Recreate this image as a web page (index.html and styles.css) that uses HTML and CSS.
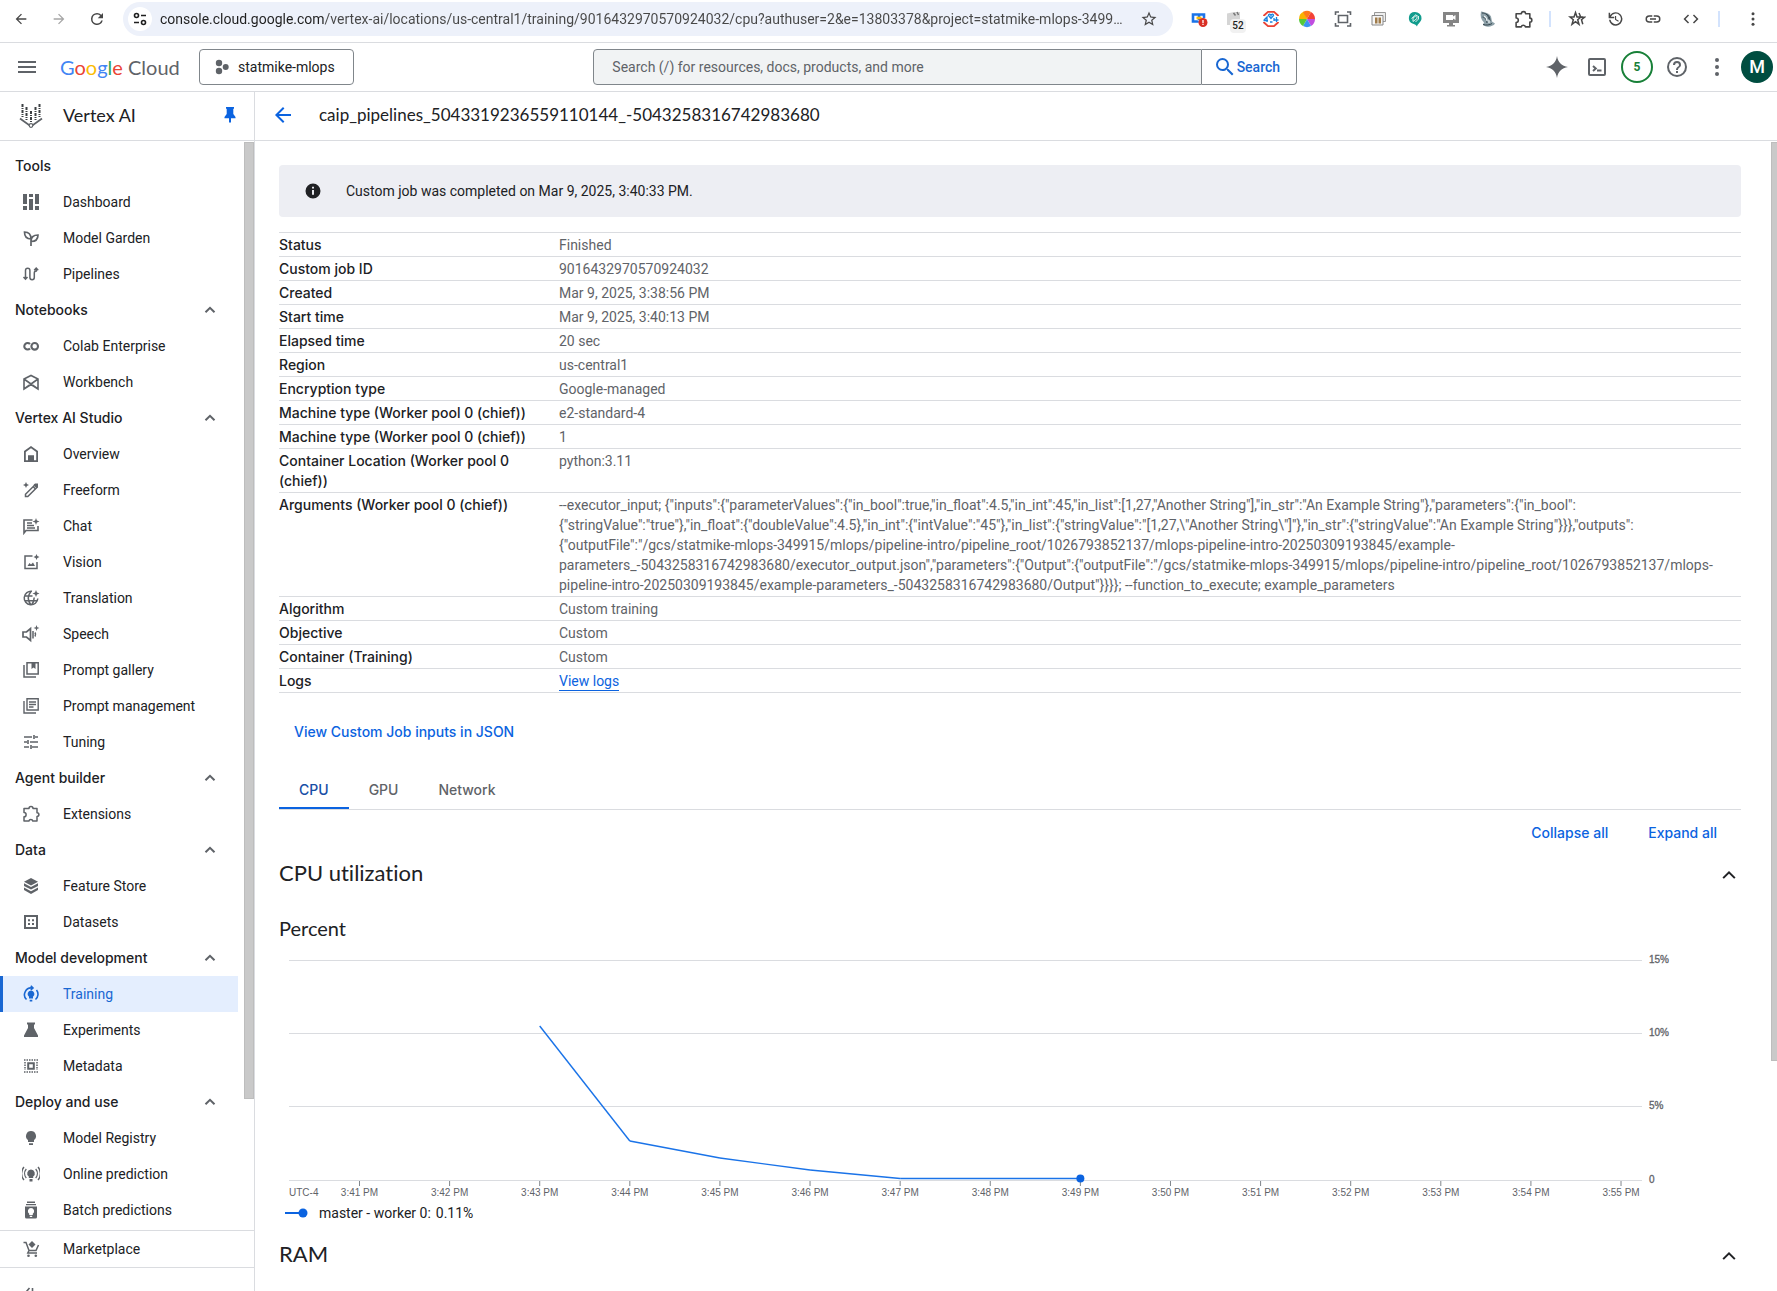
FILE: index.html
```html
<!DOCTYPE html>
<html lang="en">
<head>
<meta charset="utf-8">
<title>Training – Vertex AI – Google Cloud console</title>
<link rel="stylesheet" href="styles.css">
</head>
<body>
<svg class="sprite" aria-hidden="true">
  <symbol id="chev" viewBox="0 0 12 12"><path d="M1.500 8.300 6 3.800l4.500 4.500" fill="none" stroke="currentColor" stroke-width="2"/></symbol>
  <symbol id="chev-lg" viewBox="0 0 24 24"><path d="M5 15.800 12 8.800l7 7" fill="none" stroke="currentColor" stroke-width="2.400"/></symbol>
  <symbol id="back" viewBox="0 0 24 24"><path d="M20 11H7.830l5.590-5.590L12 4l-8 8 8 8 1.410-1.410L7.830 13H20v-2z"/></symbol>
  <symbol id="forward" viewBox="0 0 24 24"><path d="M12 4l-1.410 1.410L16.170 11H4v2h12.170l-5.580 5.590L12 20l8-8z"/></symbol>
  <symbol id="dots" viewBox="0 0 24 24"><circle cx="12" cy="5" r="2"/><circle cx="12" cy="12" r="2"/><circle cx="12" cy="19" r="2"/></symbol>
  <symbol id="puzzle" viewBox="0 0 18 18"><path d="M2 3.500h5a2 2 0 0 1 4 0h4v4.200a1.900 1.900 0 0 1 0 3.800V16H10.800a2 2 0 0 0-3.900 0H2v-4.200a2.100 2.100 0 0 0 0-4.200z" fill="none" stroke="currentColor" stroke-width="1.500" stroke-linejoin="round"/></symbol>
  <symbol id="bulb" viewBox="0 0 18 18"><path d="M9 2a5 5 0 0 0-3 9v2h6v-2a5 5 0 0 0-3-9zM7 14.200h4V16H7z"/></symbol>
</svg>

<div class="app">
  <header class="browser">
    <div class="browser-nav">
      <button class="tool" aria-label="Back"><svg width="16" height="16"><use href="#back"/></svg></button>
      <button class="tool faded" aria-label="Forward"><svg width="16" height="16"><use href="#forward"/></svg></button>
      <button class="tool" aria-label="Reload"><svg width="18" height="18" viewBox="0 0 24 24"><path d="M17.650 6.350A7.960 7.960 0 0 0 12 4a8 8 0 1 0 7.730 10h-2.080A6 6 0 1 1 12 6c1.660 0 3.140.690 4.220 1.780L13 11h7V4z"/></svg></button>
    </div>
    <div class="omnibox">
      <button class="site" aria-label="View site information"><svg width="16" height="16" viewBox="0 0 16 16" fill="none" stroke="currentColor" stroke-width="1.600"><circle cx="4.500" cy="4.500" r="2"/><path d="M9 4.500h5M2 11.500h5"/><circle cx="11.500" cy="11.500" r="2"/></svg></button>
      <input class="url" type="text" aria-label="Address" value="console.cloud.google.com/vertex-ai/locations/us-central1/training/9016432970570924032/cpu?authuser=2&amp;e=13803378&amp;project=statmike-mlops-349915">
      <button class="tool star" aria-label="Bookmark this page"><svg width="18" height="18" viewBox="0 0 24 24"><path d="M22 9.240l-7.190-.620L12 2 9.190 8.630 2 9.240l5.460 4.730L5.820 21 12 17.270 18.180 21l-1.630-7.030zM12 15.400l-3.760 2.270 1-4.280-3.320-2.880 4.380-.380L12 6.100l1.710 4.040 4.380.380-3.320 2.880 1 4.280z"/></svg></button>
    </div>
    <div class="extensions">
      <button aria-label="Cloud extension"><svg width="18" height="18" viewBox="0 0 18 18"><path d="M7.500 5.500V4.500H3v7h4.500v-1M9 10V4.500h5V8" fill="none" stroke="#1a73e8" stroke-width="2.600"/><path d="M6.500 8h5" stroke="#fbbc04" stroke-width="2.600"/><circle cx="13" cy="12.500" r="4.500" fill="#d93025"/><path d="M13 10v3M13 13.800v1.200" stroke="#fff" stroke-width="1.300"/></svg></button>
      <button class="badged" aria-label="Notes, 52 items"><svg width="18" height="18" viewBox="0 0 18 18"><path d="M1 3.500 8 2h6v13H1z" fill="#d5d5d5"/><path d="M7.500 3l2 2.500M11 2l1.500 3" stroke="#777" stroke-width="1.500"/></svg><span class="badge">52</span></button>
      <button aria-label="Ad filter"><svg width="18" height="18" viewBox="0 0 18 18" fill="none"><path d="M2 6V5.500L6 1.800h6l4 3.700V6M2 12v.500l4 3.700h6l4-3.700V12" stroke="#ea4335" stroke-width="1.800"/><path d="M1.500 10.500h4.500M2 10l3-3v5M12 11V8M12 10h4.500M14.500 7v5M6.500 5.500c0-2 2-1.500 2.500 0 .500-1.500 2.500-2 2.500 0L9 8.500zM8 12h2.500" stroke="#1a84e0" stroke-width="1.300"/></svg></button>
      <button aria-label="Color picker"><svg width="18" height="18" viewBox="0 0 18 18"><path d="M9 9 1 9a8 8 0 0 1 5-7.400z" fill="#f9b300"/><path d="M9 9 5 2a8 8 0 0 1 8 0z" fill="#ff7a1a"/><path d="M9 9l4-7a8 8 0 0 1 4 7z" fill="#f44336"/><path d="M9 9h8a8 8 0 0 1-4 7z" fill="#c04de0"/><path d="M9 9l4 7a8 8 0 0 1-8 0z" fill="#3b93f3"/><path d="M9 9l-4 7a8 8 0 0 1-4-7z" fill="#57c93a"/></svg></button>
      <button aria-label="Screenshot"><svg width="18" height="18" viewBox="0 0 18 18" fill="none" stroke="#5f6368" stroke-width="1.600"><path d="M1.500 5V2H5M13 2h3.500v3M16.500 13v3H13M5 16H1.500v-3"/><path d="M4.500 5.500h9v7h-9z"/></svg></button>
      <button aria-label="Window manager"><svg width="18" height="18" viewBox="0 0 18 18"><path d="M4.500 2.500h11v9h-11z" fill="#eee" stroke="#999"/><path d="M2 5.500h11v9.500H2z" fill="#f6f6f6" stroke="#888"/><path d="M5 7.500h2.500v6H5zM8.500 7.500H11v6H8.500z" fill="#a07c4a"/></svg></button>
      <button aria-label="Location tool"><svg width="18" height="18" viewBox="0 0 18 18"><path d="M9 2a6.500 6.200 0 0 1 6.500 6.200c0 4-4 5.300-4.500 8.300-1-1.500-2-2.300-4-2.800A6 6 0 0 1 9 2z" fill="#119c8d"/><path d="M5.500 8.500 10 4.500M7 11.500V8l4-3v3.500zM9.500 12l3-3V6" fill="none" stroke="#d9f0ec" stroke-width="1"/></svg></button>
      <button aria-label="Screen recorder"><svg width="18" height="18" viewBox="0 0 18 18"><path d="M1 2h16v11h-6v2h2v1.500H5V15h2v-2H1z" fill="#858585"/><path d="M4 5h7v1.500L13.500 5v5L11 8.500V10H4z" fill="#fff"/></svg></button>
      <button aria-label="Knight extension"><svg width="18" height="18" viewBox="0 0 18 18"><path d="M3 1.500c4 1 8 1 10 5l1 5 3 2c-2 4-11 4-12 1l1-2C3 10 2 6 3 1.500z" fill="#8ea1a9"/><path d="M4 3c4 0 6 2 7 6M4.500 7c2 0 4 2 4.500 6M8 4c3 1 4 4 4 7M5 14.500c3 1 7 .500 9-1" fill="none" stroke="#34454d" stroke-width="1"/><path d="M6 6c2 1 3 3 3 5M11 10v3" fill="none" stroke="#eef4f6" stroke-width="1.200"/></svg></button>
      <button aria-label="Extensions"><svg width="19" height="19"><use href="#puzzle"/></svg></button>
    </div>
    <span class="bar-sep"></span>
    <div class="shortcuts">
      <button aria-label="Favorites"><svg width="18" height="18" viewBox="0 0 18 18" fill="none" stroke="currentColor" stroke-width="1.500"><path d="M7.500 2.500 9 7h4l-3.300 2.700 1.300 4.600-3.500-2.600L4 14.300l1.300-4.600L2 7h4zM11 3l1.500 3.500M12.700 7.200h3.800l-3 2.500 1.300 4.600"/></svg></button>
      <button aria-label="History"><svg width="18" height="18" viewBox="0 0 24 24"><path d="M13 3a9 9 0 0 0-7.500 4V3.500h-2V11H11V9H6.500A7 7 0 1 1 6 13H4a9 9 0 1 0 9-10zm-1 5v5l4.300 2.600.800-1.300-3.600-2.100V8z"/></svg></button>
      <button aria-label="Copy link"><svg width="18" height="18" viewBox="0 0 24 24"><path d="M3.900 12c0-1.710 1.390-3.100 3.100-3.100h4V7H7a5 5 0 0 0 0 10h4v-1.900H7A3.100 3.100 0 0 1 3.900 12zM8 13h8v-2H8zm9-6h-4v1.900h4a3.100 3.100 0 1 1 0 6.200h-4V17h4a5 5 0 0 0 0-10z"/></svg></button>
      <button aria-label="Developer tools"><svg width="18" height="18" viewBox="0 0 24 24"><path d="M9.400 16.600 4.800 12l4.600-4.600L8 6l-6 6 6 6zm5.200 0 4.600-4.600-4.600-4.600L16 6l6 6-6 6z"/></svg></button>
    </div>
    <span class="bar-sep"></span>
    <button class="menu-dots" aria-label="Chrome menu"><svg width="18" height="18"><use href="#dots"/></svg></button>
  </header>

  <header class="gcp">
    <button class="burger" aria-label="Main menu"><svg width="18" height="12" viewBox="0 0 18 12"><path d="M0 0h18v2H0zM0 5h18v2H0zM0 10h18v2H0z"/></svg></button>
    <a class="logo" href="#"><span class="b">G</span><span class="r">o</span><span class="y">o</span><span class="b">g</span><span class="g">l</span><span class="r">e</span> Cloud</a>
    <button class="project"><svg width="14" height="16" viewBox="0 0 14 16"><circle cx="4" cy="4" r="3.200"/><circle cx="4" cy="12" r="3.200"/><circle cx="10.700" cy="8" r="3"/></svg>statmike-mlops</button>
    <form class="search">
      <input type="text" aria-label="Search" placeholder="Search (/) for resources, docs, products, and more">
      <button type="button"><svg width="24" height="24" viewBox="0 0 24 24"><path d="M15.500 14h-.790l-.280-.270A6.470 6.470 0 0 0 16 9.500 6.500 6.500 0 1 0 9.500 16c1.610 0 3.090-.590 4.230-1.570l.270.280v.790l5 4.990L20.490 19zm-6 0a4.500 4.500 0 1 1 0-9 4.500 4.500 0 0 1 0 9z"/></svg>Search</button>
    </form>
    <div class="gcp-tools">
      <button aria-label="Gemini"><svg width="24" height="24" viewBox="0 0 24 24"><path d="M12 1c.900 6.300 4.700 10.100 11 11-6.300.900-10.100 4.700-11 11-.900-6.300-4.700-10.100-11-11 6.300-.900 10.100-4.700 11-11z"/></svg></button>
      <button aria-label="Cloud Shell"><svg width="20" height="20" viewBox="0 0 20 20" fill="none" stroke="currentColor" stroke-width="2"><rect x="2" y="2" width="16" height="16" rx="1"/><path d="M6 9l2.800 2.500L6 14M10 13.500h4.500"/></svg></button>
      <button aria-label="5 notifications"><span class="ring">5</span></button>
      <button aria-label="Help"><svg width="24" height="24" viewBox="0 0 24 24"><path d="M11 18h2v-2h-2zm1-16a10 10 0 1 0 0 20 10 10 0 0 0 0-20zm0 18a8 8 0 1 1 0-16 8 8 0 0 1 0 16zm0-14a4 4 0 0 0-4 4h2a2 2 0 1 1 4 0c0 2-3 1.750-3 5h2c0-2.250 3-2.500 3-5a4 4 0 0 0-4-4z"/></svg></button>
      <button aria-label="More options"><svg width="24" height="24"><use href="#dots"/></svg></button>
      <button aria-label="Account"><span class="avatar">M</span></button>
    </div>
  </header>

  <div class="body">
    <aside class="sidebar">
      <div class="side-title">
        <svg width="24" height="26" viewBox="0 0 24 26"><path d="M1 16.500 12 24.500 23 16.500" fill="none" stroke="#5f6368" stroke-width="1.800"/><circle cx="12" cy="23.500" r="1.800" fill="#fff" stroke="#5f6368" stroke-width="1.200"/><path d="M3.500 2v13M7.500 5v13M12 9v11M16.500 5v13M20.500 2v13" stroke="#3c4043" stroke-width="2" stroke-dasharray="3 1 1 1"/></svg>
        <span class="product">Vertex AI</span>
        <button class="pin" aria-label="Unpin menu"><svg width="14" height="18" viewBox="0 0 14 18"><path d="M3 1h8v1.500l-.700.500v5L12.500 11v1.200H8V16l-1 1-1-1v-3.800H1.500V11l2.200-3V3L3 2.500z"/></svg></button>
      </div>
      <div class="side-scroll">
        <nav class="nav">
          <h2>Tools</h2>
          <a href="#"><svg viewBox="0 0 18 18"><path d="M1 1h4v10H1zM1 13h4v4H1zM7 1h4v3H7zM7 6h4v11H7zM13 1h4v10h-4zM13 13h4v4h-4z"/></svg>Dashboard</a>
          <a href="#"><svg viewBox="0 0 18 18" fill="none" stroke="currentColor" stroke-width="1.700"><path d="M9 17V10M9 10C4 10 2.500 7 2.500 3 6 3 9 4.500 9 10zM9 12.500C9 8 11.500 6 16 6c0 4-2.500 6.500-7 6.500z"/></svg>Model Garden</a>
          <a href="#"><svg viewBox="0 0 18 18" fill="none" stroke="currentColor" stroke-width="1.500"><path d="M3.500 14V5.500a2.200 2.200 0 0 1 4.400 0v7a2.200 2.200 0 0 0 4.400 0V8a2 2 0 0 1 2-2V3M1.500 12l2 2.200 2-2.200M12.200 5.200l2-2.200 2 2.200"/></svg>Pipelines</a>
          <h2>Notebooks<button aria-label="Collapse Notebooks"><svg><use href="#chev"/></svg></button></h2>
          <a href="#"><svg viewBox="0 0 18 18" fill="none" stroke="currentColor" stroke-width="2.100"><path d="M8 7A3.300 3.300 0 1 0 8 11.500"/><circle cx="12.700" cy="9.300" r="3.300"/></svg>Colab Enterprise</a>
          <a href="#"><svg viewBox="0 0 18 18" fill="none" stroke="currentColor" stroke-width="1.600"><path d="M2 6 9 2.500 16 6v10L9 11.500 2 16zM2 6l14 10M16 6 2 16"/></svg>Workbench</a>
          <h2>Vertex AI Studio<button aria-label="Collapse Vertex AI Studio"><svg><use href="#chev"/></svg></button></h2>
          <a href="#"><svg viewBox="0 0 18 18"><path d="M9 1 2 6v11h14V6zm0 2.200L14.200 7v8.200H12v-5H6v5H3.800V7z"/><path d="M6.500 11h5v5h-5z"/></svg>Overview</a>
          <a href="#"><svg viewBox="0 0 18 18"><path d="M4 1l.900 2.100L7 4l-2.100.900L4 7l-.900-2.100L1 4l2.100-.900z"/><path d="M3.500 15.500v-2.300L12.800 4l2.300 2.300L5.800 15.500zM11 5.500l2.500 2.500" fill="none" stroke="currentColor" stroke-width="1.500"/><path d="M13 2.500h3v3l-1.500 1.800L11.500 4z"/></svg>Freeform</a>
          <a href="#"><svg viewBox="0 0 18 18"><path d="M10.500 3H2v13l2-2.500h12V9" fill="none" stroke="currentColor" stroke-width="1.600"/><path d="M5 6h5M5 8.500h7M5 11h8" stroke="currentColor" stroke-width="1.300"/><path d="M14 1l.900 2.600 2.600.900-2.600.900L14 8l-.900-2.600-2.600-.900 2.600-.900z"/></svg>Chat</a>
          <a href="#"><svg viewBox="0 0 18 18"><path d="M10.500 3H3v12.500h12V9" fill="none" stroke="currentColor" stroke-width="1.500"/><path d="M5.500 13 7.500 10l1.500 1.500L11 9.500l2 3.500z"/><path d="M14.500 1l.900 2.100 2.100.900-2.100.900-.900 2.100-.900-2.100-2.100-.900 2.100-.900z"/></svg>Vision</a>
          <a href="#"><svg viewBox="0 0 18 18"><path d="M10 2.300A6.800 6.800 0 1 0 15.800 9.500M2.500 7h8M2.500 11.700h13M9 2.500c-3.500 4-3.500 9 0 13.500M9.500 16c2.500-3 2.700-4.500 2.700-7.500" fill="none" stroke="currentColor" stroke-width="1.500"/><path d="M14 1l1 2.500 2.500 1L15 5.500 14 8l-1-2.500-2.500-1 2.500-1z"/></svg>Translation</a>
          <a href="#"><svg viewBox="0 0 18 18"><path d="M1 7h3.500L8.500 3.500v12L4.500 12H1z" fill="none" stroke="currentColor" stroke-width="1.700"/><path d="M11 6v7.500M13 7.500c.800 1.300.800 2.700 0 4" fill="none" stroke="currentColor" stroke-width="1.500"/><path d="M14.500 0l.800 2.200 2.200.800-2.200.800-.800 2.200-.800-2.200-2.200-.800 2.200-.800z"/></svg>Speech</a>
          <a href="#"><svg viewBox="0 0 18 18"><path d="M5 1.800h11.200V13H5zM2 4v12h12" fill="none" stroke="currentColor" stroke-width="1.500"/><path d="M9.500 2h4v6l-2-1.500-2 1.500z"/></svg>Prompt gallery</a>
          <a href="#"><svg viewBox="0 0 18 18"><path d="M5 1.800h11.200V13H5zM2 4v12h12M7 5h7M7 7.500h7M7 10h4.500" fill="none" stroke="currentColor" stroke-width="1.400"/></svg>Prompt management</a>
          <a href="#"><svg viewBox="0 0 18 18"><path d="M2 4h8M13 4h3M12 2v4M2 9h3M8 9h8M6 7v4M2 14h5M10 14h6M9 12v4" fill="none" stroke="currentColor" stroke-width="1.600"/></svg>Tuning</a>
          <h2>Agent builder<button aria-label="Collapse Agent builder"><svg><use href="#chev"/></svg></button></h2>
          <a href="#"><svg><use href="#puzzle"/></svg>Extensions</a>
          <h2>Data<button aria-label="Collapse Data"><svg><use href="#chev"/></svg></button></h2>
          <a href="#"><svg viewBox="0 0 18 18"><path d="M9 1l7 3.700-7 3.700-7-3.700zM2 6.300l7 3.700 7-3.700v2.600l-7 3.700-7-3.700zM2 10.500l7 3.700 7-3.700v2.600L9 17l-7-3.900z"/></svg>Feature Store</a>
          <a href="#"><svg viewBox="0 0 18 18"><path d="M3 3h12v12H3z" fill="none" stroke="currentColor" stroke-width="2"/><path d="M6 6.300h2v2H6zM10 6.300h2v2h-2zM6 10h2v2H6zM10 10h2v2h-2z"/></svg>Datasets</a>
          <h2>Model development<button aria-label="Collapse Model development"><svg><use href="#chev"/></svg></button></h2>
          <a class="active" href="#" aria-current="page"><svg viewBox="0 0 18 18"><path d="M9 5.500a3.500 3.500 0 0 0-2 6.300V13.500h4v-1.700a3.500 3.500 0 0 0-2-6.300zM7.700 14.700h2.600V16.500H7.700z"/><path d="M4.500 14.500A6.800 6.800 0 0 1 10.500 3M13.500 14.500a6.800 6.800 0 0 0 1-9.500M8.800.800l2.200 2.200L8.800 5" fill="none" stroke="currentColor" stroke-width="1.600"/></svg>Training</a>
          <a href="#"><svg viewBox="0 0 18 18"><path d="M5 1.500h8V3.500h-1V7l4 7.500V16H2v-1.500L6 7V3.500H5z"/></svg>Experiments</a>
          <a href="#"><svg viewBox="0 0 18 18" fill="none" stroke="currentColor"><path d="M2 3h14M2 15h14M3 5v8M15 5v8" stroke-width="1.500" stroke-dasharray="1.500 1"/><path d="M6.200 6.200h5.600v5.600H6.200z" stroke-width="2"/></svg>Metadata</a>
          <h2>Deploy and use<button aria-label="Collapse Deploy and use"><svg><use href="#chev"/></svg></button></h2>
          <a href="#"><svg><use href="#bulb"/></svg>Model Registry</a>
          <a href="#"><svg viewBox="0 0 18 18"><path d="M9 4.500a3.800 3.800 0 0 0-2.200 6.900V13h4.400v-1.600A3.800 3.800 0 0 0 9 4.500zM7.500 14h3v2.500h-3z"/><path d="M4.300 13a7 7 0 0 1 0-9M13.700 13a7 7 0 0 0 0-9M2 15a10 10 0 0 1 0-13M16 15a10 10 0 0 0 0-13" fill="none" stroke="currentColor" stroke-width="1.300"/></svg>Online prediction</a>
          <a href="#"><svg viewBox="0 0 18 18"><path d="M5 .500h8V2H5zM4 3h10v1.300H4zM3 5.500h12V16a1.500 1.500 0 0 1-1.500 1.500h-9A1.500 1.500 0 0 1 3 16zM9 7a3.200 3.200 0 0 0-1.800 5.800V14h3.600v-1.200A3.200 3.200 0 0 0 9 7zM7.800 14.800V16h2.400v-1.200z" fill-rule="evenodd"/></svg>Batch predictions</a>
        </nav>
        <div class="track" aria-hidden="true"><div class="thumb"></div></div>
      </div>
      <div class="side-foot">
        <a href="#"><svg viewBox="0 0 18 18"><path d="M1.500 2.500H4l3 8h7l2.500-5.500M7 10.500 5.800 13H15" fill="none" stroke="currentColor" stroke-width="1.500"/><circle cx="6.500" cy="15.800" r="1.300"/><circle cx="13.800" cy="15.800" r="1.300"/><path d="M10 1l3.500 3.500L10 8 6.500 4.500z"/></svg>Marketplace</a>
        <button aria-label="Hide menu"><svg viewBox="0 0 18 18" fill="none" stroke="currentColor" stroke-width="1.600"><path d="M7.500 2 1.500 9l6 7M10.500 2v14"/></svg></button>
      </div>
    </aside>

    <main class="main">
      <div class="page-title">
        <button aria-label="Go back"><svg width="24" height="24"><use href="#back"/></svg></button>
        <h1>caip_pipelines_5043319236559110144_-5043258316742983680</h1>
      </div>
      <div class="main-scroll">
        <div class="content">
          <div class="banner"><svg width="18" height="18" viewBox="0 0 24 24"><path d="M12 2a10 10 0 1 0 0 20 10 10 0 0 0 0-20zm1.300 15h-2.600v-6.500h2.600zm0-8.300h-2.600V6.200h2.600z"/></svg>Custom job was completed on Mar 9, 2025, 3:40:33 PM.</div>

          <table class="details">
            <tr><th scope="row">Status</th><td>Finished</td></tr>
            <tr><th scope="row">Custom job ID</th><td>9016432970570924032</td></tr>
            <tr><th scope="row">Created</th><td>Mar 9, 2025, 3:38:56 PM</td></tr>
            <tr><th scope="row">Start time</th><td>Mar 9, 2025, 3:40:13 PM</td></tr>
            <tr><th scope="row">Elapsed time</th><td>20 sec</td></tr>
            <tr><th scope="row">Region</th><td>us-central1</td></tr>
            <tr><th scope="row">Encryption type</th><td>Google-managed</td></tr>
            <tr><th scope="row">Machine type (Worker pool 0 (chief))</th><td>e2-standard-4</td></tr>
            <tr><th scope="row">Machine type (Worker pool 0 (chief))</th><td>1</td></tr>
            <tr><th scope="row">Container Location (Worker pool 0 (chief))</th><td>python:3.11</td></tr>
            <tr><th scope="row">Arguments (Worker pool 0 (chief))</th><td>--executor_input; {"inputs":{"parameterValues":{"in_bool":true,"in_float":4.5,"in_int":45,"in_list":[1,27,"Another String"],"in_str":"An Example String"},"parameters":{"in_bool":{"stringValue":"true"},"in_float":{"doubleValue":4.5},"in_int":{"intValue":"45"},"in_list":{"stringValue":"[1,27,\"Another String\"]"},"in_str":{"stringValue":"An Example String"}}},"outputs":{"outputFile":"/gcs/statmike-mlops-349915/mlops/pipeline-intro/pipeline_root/1026793852137/mlops-pipeline-intro-20250309193845/example-parameters_-5043258316742983680/executor_output.json","parameters":{"Output":{"outputFile":"/gcs/statmike-mlops-349915/mlops/pipeline-intro/pipeline_root/1026793852137/mlops-pipeline-intro-20250309193845/example-parameters_-5043258316742983680/Output"}}}}; --function_to_execute; example_parameters</td></tr>
            <tr><th scope="row">Algorithm</th><td>Custom training</td></tr>
            <tr><th scope="row">Objective</th><td>Custom</td></tr>
            <tr><th scope="row">Container (Training)</th><td>Custom</td></tr>
            <tr><th scope="row">Logs</th><td><a href="#">View logs</a></td></tr>
          </table>

          <button class="text-btn json">View Custom Job inputs in JSON</button>

          <div class="tabs" role="tablist">
            <button role="tab" aria-selected="true">CPU</button>
            <button role="tab" aria-selected="false">GPU</button>
            <button role="tab" aria-selected="false">Network</button>
          </div>

          <div class="actions">
            <button class="text-btn">Collapse all</button>
            <button class="text-btn">Expand all</button>
          </div>

          <section>
            <div class="section-head"><h2>CPU utilization</h2><button aria-label="Collapse CPU utilization"><svg width="20" height="20"><use href="#chev-lg"/></svg></button></div>
            <h3>Percent</h3>
            <svg class="chart" role="img" aria-label="CPU utilization in percent">
              <g class="grid">
                <line x1="0" x2="100%" y1="10.500" y2="10.500"/><line x1="0" x2="100%" y1="83.500" y2="83.500"/><line x1="0" x2="100%" y1="156.500" y2="156.500"/><line x1="0" x2="100%" y1="230.500" y2="230.500"/>
              </g>
              <g class="y-labels">
                <text x="100%" dx="7" y="13">15%</text><text x="100%" dx="7" y="86">10%</text><text x="100%" dx="7" y="159">5%</text><text x="100%" dx="7" y="233">0</text>
              </g>
              <g class="ticks">
                <line x1="5.210%" x2="5.210%" y1="231" y2="236"/><line x1="11.870%" x2="11.870%" y1="231" y2="236"/><line x1="18.530%" x2="18.530%" y1="231" y2="236"/><line x1="25.190%" x2="25.190%" y1="231" y2="236"/><line x1="31.850%" x2="31.850%" y1="231" y2="236"/><line x1="38.510%" x2="38.510%" y1="231" y2="236"/><line x1="45.170%" x2="45.170%" y1="231" y2="236"/><line x1="51.830%" x2="51.830%" y1="231" y2="236"/><line x1="58.490%" x2="58.490%" y1="231" y2="236"/><line x1="65.150%" x2="65.150%" y1="231" y2="236"/><line x1="71.810%" x2="71.810%" y1="231" y2="236"/><line x1="78.470%" x2="78.470%" y1="231" y2="236"/><line x1="85.130%" x2="85.130%" y1="231" y2="236"/><line x1="91.790%" x2="91.790%" y1="231" y2="236"/><line x1="98.450%" x2="98.450%" y1="231" y2="236"/>
              </g>
              <g class="x-labels">
                <text class="zone" x="0" y="246">UTC-4</text>
                <text x="5.210%" y="246">3:41 PM</text><text x="11.870%" y="246">3:42 PM</text><text x="18.530%" y="246">3:43 PM</text><text x="25.190%" y="246">3:44 PM</text><text x="31.850%" y="246">3:45 PM</text><text x="38.510%" y="246">3:46 PM</text><text x="45.170%" y="246">3:47 PM</text><text x="51.830%" y="246">3:48 PM</text><text x="58.490%" y="246">3:49 PM</text><text x="65.150%" y="246">3:50 PM</text><text x="71.810%" y="246">3:51 PM</text><text x="78.470%" y="246">3:52 PM</text><text x="85.130%" y="246">3:53 PM</text><text x="91.790%" y="246">3:54 PM</text><text x="98.450%" y="246">3:55 PM</text>
              </g>
              <g class="series">
                <line x1="18.530%" y1="76" x2="25.190%" y2="191"/><line x1="25.190%" y1="191" x2="31.850%" y2="208"/><line x1="31.850%" y1="208" x2="38.510%" y2="220"/><line x1="38.510%" y1="220" x2="45.170%" y2="228.500"/><line x1="45.170%" y1="228.500" x2="58.490%" y2="228.500"/>
                <circle cx="58.490%" cy="228.500" r="4"/>
              </g>
            </svg>
            <div class="legend"><svg width="24" height="10" viewBox="0 0 24 10"><path d="M0 4h14v2H0z"/><circle cx="18" cy="5" r="4.500"/></svg><span>master - worker 0:</span><span>0.11%</span></div>
          </section>

          <section>
            <div class="section-head"><h2>RAM</h2><button aria-label="Collapse RAM"><svg width="20" height="20"><use href="#chev-lg"/></svg></button></div>
          </section>
        </div>
        <div class="track" aria-hidden="true"><div class="thumb"></div></div>
      </div>
    </main>
  </div>
</div>
</body>
</html>
```
FILE: styles.css
```css
:root {
  --text: #202124;
  --muted: #5f6368;
  --line: #dadce0;
  --blue: #0b63e0;
  --ui: Inter, "Open Sans", sans-serif;
  --display: Lato, "Open Sans", sans-serif;
}

* { box-sizing: border-box; }

body {
  margin: 0;
  font: 14px/20px Roboto, sans-serif;
  color: var(--text);
  background: #fff;
}

h1, h2, h3 { margin: 0; font-weight: 400; }
a { color: inherit; text-decoration: none; }
svg { fill: currentColor; flex: none; }
svg[fill="none"] { fill: none; }
.sprite { position: absolute; width: 0; height: 0; }

button {
  display: flex;
  align-items: center;
  justify-content: center;
  padding: 0;
  border: 0;
  background: none;
  color: inherit;
  font: inherit;
  cursor: pointer;
}

.app {
  display: flex;
  flex-direction: column;
  height: 100vh;
  overflow: hidden;
}

/* Browser toolbar */
.browser {
  display: flex;
  align-items: center;
  flex: none;
  height: 43px;
  padding: 0 14px 4px 2px;
  border-bottom: 1px solid var(--line);
  color: #474747;
}
.browser-nav { display: flex; margin-right: 7px; }
.tool { width: 38px; height: 34px; }
.tool.faded { color: #a6a6a6; }
.omnibox {
  display: flex;
  align-items: center;
  flex: 1;
  height: 34px;
  padding: 0 5px;
  border-radius: 17px;
  background: #edf1fa;
}
.site {
  width: 24px;
  height: 24px;
  border-radius: 50%;
  background: #fff;
  color: #1f1f1f;
}
.url {
  flex: 0 1 964px;
  min-width: 0;
  margin: 0 auto 0 8px;
  padding: 0;
  border: 0;
  outline: 0;
  font: inherit;
  text-overflow: ellipsis;
  background: linear-gradient(90deg, #1f1f1f 164px, #474747 164px);
  background-clip: text;
  -webkit-background-clip: text;
  color: transparent;
}
.star { width: 38px; }
.extensions { display: flex; margin-left: 8px; }
.extensions button { width: 36px; height: 34px; }
.badged { position: relative; }
.badge {
  position: absolute;
  left: 13px;
  top: 17px;
  width: 16px;
  border-radius: 4px;
  background: #f1f1f1;
  color: #1f1f1f;
  font: 500 10px/14px Roboto, sans-serif;
}
.bar-sep { width: 2px; height: 16px; margin: 0 7px 0 8px; background: #d3e3fd; }
.shortcuts { display: flex; }
.shortcuts button { width: 38px; height: 34px; }
.menu-dots { width: 20px; height: 34px; margin-left: 16px; }

/* Console header */
.gcp {
  display: flex;
  align-items: center;
  flex: none;
  height: 49px;
  border-bottom: 1px solid var(--line);
  color: var(--muted);
}
.burger { width: 18px; height: 36px; margin: 0 24px 0 18px; }
.logo { width: 139px; padding-bottom: 1px; font: 20px/28px var(--display); white-space: nowrap; }
.logo .b { color: #4285f4; }
.logo .r { color: #ea4335; }
.logo .y { color: #fbbc04; }
.logo .g { color: #34a853; }
.project {
  gap: 9px;
  height: 36px;
  padding: 0 18px 0 15px;
  border: 1px solid #80868b;
  border-radius: 4px;
  color: var(--text);
}
.project svg { color: var(--muted); }
.search { display: flex; flex: 0 1 704px; height: 36px; margin: 0 auto; }
.search input {
  flex: 1;
  min-width: 0;
  padding: 0 18px;
  border: 1px solid #80868b;
  border-radius: 4px 0 0 4px;
  background: #f1f3f4;
  font: inherit;
}
.search input::placeholder { color: var(--muted); opacity: 1; }
.search button {
  width: 95px;
  padding-right: 6px;
  border: 1px solid #80868b;
  border-left: 0;
  border-radius: 0 4px 4px 0;
  color: #1967d2;
  font: 500 14px/20px Roboto, sans-serif;
}
.gcp-tools { display: flex; }
.gcp-tools button { width: 40px; height: 40px; }
.ring {
  width: 32px;
  border: 2px solid #188038;
  border-radius: 50%;
  color: #188038;
  font: 700 12px/28px Roboto, sans-serif;
}
.avatar {
  width: 32px;
  border-radius: 50%;
  background: #004d40;
  color: #fff;
  font: 500 18px/32px Roboto, sans-serif;
}

/* Two-column body */
.body { display: flex; flex: 1; min-height: 0; }
.sidebar {
  display: flex;
  flex-direction: column;
  flex: none;
  width: 255px;
  border-right: 1px solid var(--line);
  overflow: hidden;
}
.side-title, .page-title {
  display: flex;
  align-items: center;
  flex: none;
  height: 49px;
  padding-bottom: 2px;
  border-bottom: 1px solid var(--line);
}
.side-title { padding-left: 19px; padding-right: 17px; }
.product { margin: 0 auto 0 20px; font: 18px/24px var(--display); }
.pin { width: 14px; height: 24px; color: var(--blue); }
.side-scroll { display: flex; flex: none; }
.nav { flex: 1; padding: 7px 6px 2px 0; }
.nav h2 {
  display: flex;
  align-items: center;
  justify-content: space-between;
  height: 36px;
  padding: 0 22px 0 15px;
  font: 500 14px/20px var(--ui);
}
.nav h2 button { width: 12px; height: 20px; color: var(--muted); }
.nav h2 svg { width: 12px; height: 12px; }
.nav a, .side-foot a {
  display: flex;
  align-items: center;
  gap: 23px;
  height: 36px;
  padding-left: 22px;
}
.nav a svg, .side-foot svg { width: 18px; height: 18px; color: var(--muted); }
.nav .active { border-left: 3px solid #1967d2; padding-left: 19px; background: #e4eefe; color: #1967d2; }
.nav .active svg { color: #1967d2; }

.track { flex: none; width: 10px; padding-top: 1px; }
.thumb { height: 88%; border: 1px solid #bdbdbd; background: #c9c9c9; }
.side-foot { border-top: 1px solid var(--line); }
.side-foot a { border-bottom: 1px solid var(--line); height: 37px; }
.side-foot button { height: 54px; padding-left: 22px; }

/* Main column */
.main { display: flex; flex-direction: column; flex: 1; min-width: 0; }
.page-title { gap: 24px; padding-left: 16px; }
.page-title button { color: var(--blue); }
.page-title h1 { font: 17px/24px var(--display); }
.main-scroll { display: flex; flex: 1; min-height: 0; }
.content { flex: 1; min-width: 0; padding: 24px 30px 0 24px; overflow: hidden; }
.main-scroll .track { width: 6px; }
.main-scroll .thumb { height: 80%; border-right: 0; }

.banner {
  display: flex;
  align-items: center;
  gap: 24px;
  height: 52px;
  padding: 0 25px;
  border-radius: 4px;
  background: #edeef3;
}

.details { width: 100%; margin-top: 15px; border-collapse: collapse; }
.details tr { border-top: 1px solid var(--line); }
.details tr:last-child { border-bottom: 1px solid var(--line); }
.details th, .details td { padding: 2px 24px 1px 0; text-align: left; vertical-align: top; }
.details th { width: 280px; font: 500 14px/20px var(--ui); }
.details td { color: var(--muted); }
.details td a { display: inline-block; height: 20px; border-bottom: 1px solid; color: var(--blue); }

.text-btn { height: 36px; color: var(--blue); font: 500 14px/20px var(--ui); }
.json { margin-top: 21px; padding: 0 15px; }

.tabs { display: flex; height: 49px; margin-top: 11px; border-bottom: 1px solid var(--line); }
.tabs button {
  padding: 12px 20px 0;
  border-bottom: 2px solid transparent;
  color: var(--muted);
  font: 500 14px/20px var(--ui);
}
.tabs [aria-selected="true"] { border-color: var(--blue); color: #174ea6; }

.actions { display: flex; justify-content: flex-end; gap: 40px; margin-top: 5px; padding-right: 24px; }

.section-head { display: flex; align-items: center; justify-content: space-between; margin-top: 6px; padding-right: 2px; }
.section-head h2 { font: 22px/32px var(--display); font-variant-ligatures: none; }
.section-head button { width: 20px; height: 20px; margin-top: 4px; }
h3 { margin-top: 25px; font: 20px/28px var(--display); }

.chart { display: block; width: calc(100% - 109px); height: 250px; margin: 8px 0 0 10px; overflow: visible; }
.chart text { font: 10px "Liberation Sans", sans-serif; fill: var(--muted); }
.y-labels text { stroke: var(--muted); stroke-width: 0.3px; }
.x-labels text { text-anchor: middle; }
.x-labels .zone { text-anchor: start; }
.grid line { stroke: var(--line); }
.ticks line { stroke: #80868b; }
.series line { stroke: #1a73e8; stroke-width: 1.4px; }
.series circle { fill: var(--blue); }

.legend { display: flex; align-items: center; gap: 5px; margin: 3px 0 15px 6px; }
.legend svg { margin-right: 5px; color: var(--blue); }
```
